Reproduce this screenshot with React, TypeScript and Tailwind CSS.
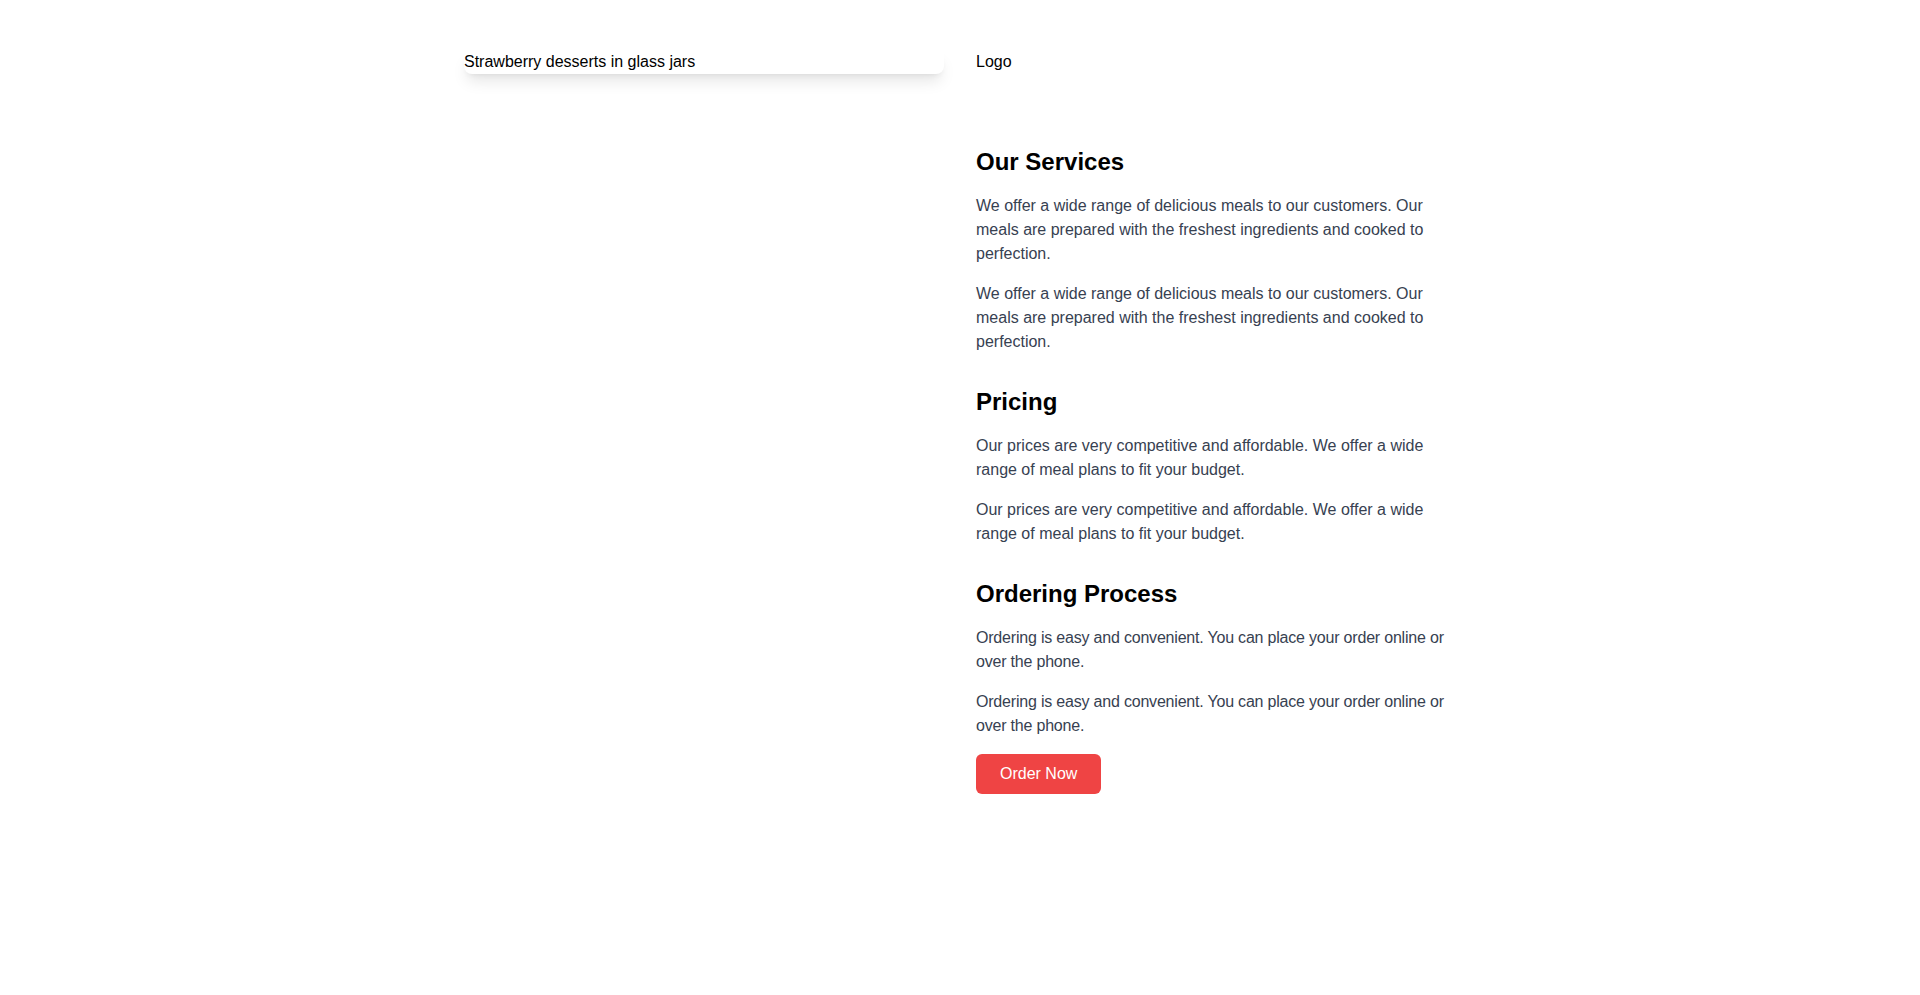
const sections = [
  {
    title: "Our Services",
    text: "We offer a wide range of delicious meals to our customers. Our meals are prepared with the freshest ingredients and cooked to perfection.",
    tight: false,
  },
  {
    title: "Pricing",
    text: "Our prices are very competitive and affordable. We offer a wide range of meal plans to fit your budget.",
    tight: false,
  },
  {
    title: "Ordering Process",
    text: "Ordering is easy and convenient. You can place your order online or over the phone.",
    tight: true,
  },
];

const App = () => {
  return (
    <div className="min-h-screen bg-white font-['Liberation_Sans',Arial,sans-serif]">
      <div className="max-w-5xl mx-auto px-4 py-12 grid grid-cols-2 gap-8">
        {/* Image (alt text only, the picture did not load) */}
        <div>
          <div className="mt-0.5 w-full h-6 rounded-lg shadow-lg text-base leading-6 text-black">
            Strawberry desserts in glass jars
          </div>
        </div>

        {/* Content */}
        <div>
          <div className="mt-0.5 text-base leading-6 text-black">Logo</div>
          <div className="mt-[72px]">
            {sections.map((section, i) => {
              const pClass = section.tight
                ? "text-base leading-6 tracking-[-0.2px] text-[#374151]"
                : "text-base leading-6 text-[#374151]";
              return (
                <div key={section.title} className={i > 0 ? "mt-8" : ""}>
                  <h2 className="text-2xl font-bold text-black mb-4">{section.title}</h2>
                  <p className={pClass + " mb-4"}>{section.text}</p>
                  <p className={pClass}>{section.text}</p>
                </div>
              );
            })}
            <button className="mt-4 bg-[#ef4444] text-white px-6 py-2 rounded-md text-base leading-6">
              Order Now
            </button>
          </div>
        </div>
      </div>
    </div>
  );
};

export default App;
